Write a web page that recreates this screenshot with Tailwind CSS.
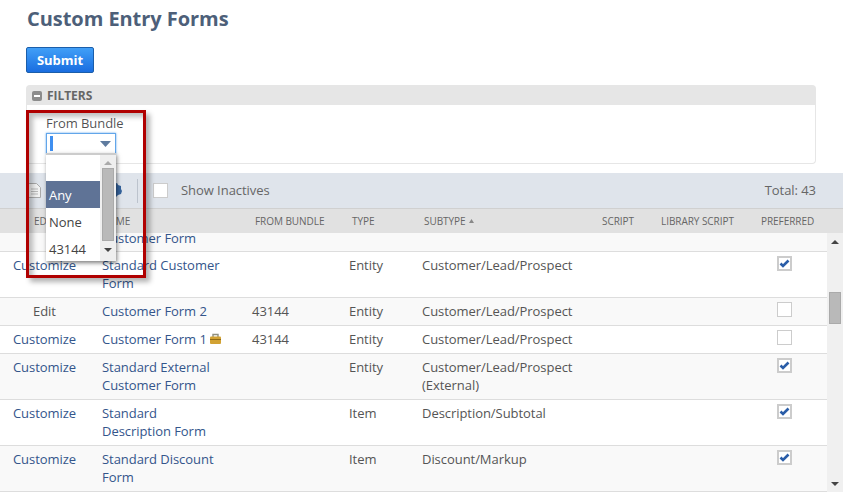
<!DOCTYPE html>
<html lang="en">

<head>
  <meta charset="UTF-8">
  <title>Custom Entry Forms</title>
  <script src="https://cdn.jsdelivr.net/npm/@tailwindcss/browser@4"></script>
</head>

<body class="relative w-[843px] h-[492px] overflow-hidden bg-white font-['Open_Sans',sans-serif] text-[13px] leading-[18px] tracking-[-0.05px] text-[#555]">
  <!-- Title, submit, filters -->
  <div class="pl-[26px] pr-[27px]">
    <h1 class="pl-[1px] h-[47px] pt-[5px] text-[20px] leading-[28px] font-bold text-[#4d5f79]">Custom Entry Forms</h1>
    <button class="block w-[68px] h-[26px] rounded-[2px] border border-[#1b5eaa] bg-gradient-to-b from-[#419ff7] to-[#1a6de0] text-white font-bold text-[13px]">Submit</button>
    <div class="mt-[12px] h-[20px] flex items-center gap-[5px] pl-[6px] pt-[1px] bg-[#e6e6e6] rounded-t-[4px]">
      <span class="w-[10px] h-[10px] rounded-[2px] bg-[#8c8c8c] flex items-center justify-center"><span class="w-[6px] h-[2px] bg-white"></span></span>
      <span class="text-[12px] font-bold text-[#666]">FILTERS</span>
    </div>
    <div class="h-[59px] border border-t-0 border-[#e6e6e6] rounded-b-[4px] pl-[19px] pt-[9px]">
      <div class="text-black/70 leading-[18px]">From Bundle</div>
      <div class="relative w-[70px] h-[21px] border border-[#62a6ea] shadow-[0_0_2px_#62a6ea] mt-[1px] pl-[3px] pt-[2px]">
        <div class="w-[3px] h-[15px] bg-[#3f8ff0]"></div>
        <svg class="absolute left-[53px] top-[7px]" width="11" height="6" viewBox="0 0 11 6"><polygon points="0,0 11,0 5.5,6" fill="#5f7b9f" /></svg>
      </div>
    </div>
  </div>

  <!-- Toolbar -->
  <div class="mt-[9px] h-[35px] bg-[#dfe4eb] flex items-center pl-[28px] pr-[27px]">
    <svg width="13" height="15" viewBox="0 0 13 15"><path d="M.5.5h8l4 4v10H.5z" fill="#f2f2f2" stroke="#aaa" /><path d="M3 6h7M3 8.5h7M3 11h7" stroke="#bbb" /></svg>
    <svg class="ml-[69px] -mt-[2px]" width="12" height="14" viewBox="0 0 12 14"><path d="M6 0a2 2 0 0 1 2 2l3 1v3l1 2-1 3-3 1-2 2-3-2-2-2V3z" fill="#35639c" /></svg>
    <div class="ml-[15px] w-px h-[24px] bg-[#bcc3cd]"></div>
    <div class="ml-[15px] w-[15px] h-[15px] bg-white border border-[#ccc]"></div>
    <span class="ml-[13px] -mt-[2px] text-[#666]">Show Inactives</span>
    <span class="ml-auto -mt-[2px] text-[#666]">Total: 43</span>
  </div>

  <!-- Table header -->
  <div class="h-[25px] bg-[#e1e1e1] border-t border-[#d0d0d0] grid grid-cols-[89px_166px_97px_72px_178px_59px_100px_1fr] items-center text-[10px] text-[#666]">
    <span class="text-center">EDIT</span>
    <span class="pl-[13px]">NAME</span>
    <span>FROM BUNDLE</span>
    <span>TYPE</span>
    <span class="flex items-center gap-[3px]">SUBTYPE
      <svg width="5" height="4" viewBox="0 0 5 4"><polygon points="2.5,0 5,4 0,4" fill="#888" /></svg></span>
    <span>SCRIPT</span>
    <span>LIBRARY SCRIPT</span>
    <span>PREFERRED</span>
  </div>

  <!-- Table body -->
  <div class="flex h-[259px] overflow-hidden">
    <div class="w-[827px]">
      <div class="h-[19px] overflow-hidden bg-[#f9f9f9] border-b border-[#ddd] flex items-end pl-[102px] pb-[4px] text-[#34558b]">Customer Form</div>

      <div class="grid grid-cols-[89px_163px_97px_73px_180px_59px_100px_1fr] bg-white border-b border-[#ddd] pt-[4px] pb-[5px]">
        <a class="text-center text-[#34558b]">Customize</a>
        <a class="pl-[13px] text-[#34558b]">Standard Customer<br>Form</a>
        <span></span>
        <span>Entity</span>
        <span>Customer/Lead/Prospect</span>
        <span></span><span></span>
        <span class="pl-[16px]"><span class="block relative w-[15px] h-[15px] border-2 border-[#ccc] bg-white"><svg class="absolute left-0 top-0" width="11" height="11" viewBox="0 0 11 11"><path d="M1.5 5.5l2.5 2.5L9.5 2.5" fill="none" stroke="#2a5da8" stroke-width="2.6" /></svg></span></span>
      </div>

      <div class="grid grid-cols-[89px_163px_97px_73px_180px_59px_100px_1fr] bg-[#f9f9f9] border-b border-[#ddd] pt-[4px] pb-[5px]">
        <span class="text-center">Edit</span>
        <a class="pl-[13px] text-[#34558b]">Customer Form 2</a>
        <span>43144</span>
        <span>Entity</span>
        <span>Customer/Lead/Prospect</span>
        <span></span><span></span>
        <span class="pl-[16px]"><span class="block w-[15px] h-[15px] border border-[#ccc] bg-white"></span></span>
      </div>

      <div class="grid grid-cols-[89px_163px_97px_73px_180px_59px_100px_1fr] bg-white border-b border-[#ddd] pt-[4px] pb-[5px]">
        <a class="text-center text-[#34558b]">Customize</a>
        <a class="pl-[13px] text-[#34558b] flex items-center gap-[3px]">Customer Form 1
          <svg class="-mt-[1px]" width="11" height="11" viewBox="0 0 11 11"><path d="M3 4V1.5h5V4" fill="none" stroke="#8f8f7f" stroke-width="1.4" /><rect x="0" y="3.5" width="11" height="7.5" rx="1" fill="#d2a233" /><rect x="0" y="6" width="11" height="1" fill="#8f6a14" /></svg></a>
        <span>43144</span>
        <span>Entity</span>
        <span>Customer/Lead/Prospect</span>
        <span></span><span></span>
        <span class="pl-[16px]"><span class="block w-[15px] h-[15px] border border-[#ccc] bg-white"></span></span>
      </div>

      <div class="grid grid-cols-[89px_163px_97px_73px_180px_59px_100px_1fr] bg-[#f9f9f9] border-b border-[#ddd] pt-[4px] pb-[5px]">
        <a class="text-center text-[#34558b]">Customize</a>
        <a class="pl-[13px] text-[#34558b]">Standard External<br>Customer Form</a>
        <span></span>
        <span>Entity</span>
        <span>Customer/Lead/Prospect<br>(External)</span>
        <span></span><span></span>
        <span class="pl-[16px]"><span class="block relative w-[15px] h-[15px] border-2 border-[#ccc] bg-white"><svg class="absolute left-0 top-0" width="11" height="11" viewBox="0 0 11 11"><path d="M1.5 5.5l2.5 2.5L9.5 2.5" fill="none" stroke="#2a5da8" stroke-width="2.6" /></svg></span></span>
      </div>

      <div class="grid grid-cols-[89px_163px_97px_73px_180px_59px_100px_1fr] bg-white border-b border-[#ddd] pt-[4px] pb-[5px]">
        <a class="text-center text-[#34558b]">Customize</a>
        <a class="pl-[13px] text-[#34558b]">Standard<br>Description Form</a>
        <span></span>
        <span>Item</span>
        <span>Description/Subtotal</span>
        <span></span><span></span>
        <span class="pl-[16px]"><span class="block relative w-[15px] h-[15px] border-2 border-[#ccc] bg-white"><svg class="absolute left-0 top-0" width="11" height="11" viewBox="0 0 11 11"><path d="M1.5 5.5l2.5 2.5L9.5 2.5" fill="none" stroke="#2a5da8" stroke-width="2.6" /></svg></span></span>
      </div>

      <div class="grid grid-cols-[89px_163px_97px_73px_180px_59px_100px_1fr] bg-[#f9f9f9] border-b border-[#ddd] pt-[4px] pb-[5px]">
        <a class="text-center text-[#34558b]">Customize</a>
        <a class="pl-[13px] text-[#34558b]">Standard Discount<br>Form</a>
        <span></span>
        <span>Item</span>
        <span>Discount/Markup</span>
        <span></span><span></span>
        <span class="pl-[16px]"><span class="block relative w-[15px] h-[15px] border-2 border-[#ccc] bg-white"><svg class="absolute left-0 top-0" width="11" height="11" viewBox="0 0 11 11"><path d="M1.5 5.5l2.5 2.5L9.5 2.5" fill="none" stroke="#2a5da8" stroke-width="2.6" /></svg></span></span>
      </div>
    </div>

    <!-- Page scrollbar -->
    <div class="w-[16px] bg-[#f0f0f0] flex flex-col items-center pt-[7px]">
      <svg width="8" height="4" viewBox="0 0 8 4"><polygon points="4,0 8,4 0,4" fill="#444" /></svg>
      <div class="mt-[48px] w-[12px] h-[32px] bg-[#b9b9b9] border border-[#aaa]"></div>
      <svg class="mt-auto mb-[6px]" width="8" height="4" viewBox="0 0 8 4"><polygon points="0,0 8,0 4,4" fill="#444" /></svg>
    </div>
  </div>

  <!-- Dropdown open over the table -->
  <div class="absolute left-[46px] top-[153px] w-[70px] h-[108px] flex bg-white border-t-2 border-[#ccc] shadow-[1px_2px_4px_rgba(0,0,0,0.5)] text-[#444]">
    <div class="w-[54px]">
      <div class="h-[26px]"></div>
      <div class="h-[27px] pl-[3px] pt-[5px] bg-[#5f7396] text-white">Any</div>
      <div class="h-[27px] pl-[3px] pt-[5px]">None</div>
      <div class="h-[27px] pl-[3px] pt-[5px]">43144</div>
    </div>
    <div class="w-[16px] bg-[#efefef] flex flex-col items-center pt-[6px]">
      <svg width="8" height="4" viewBox="0 0 8 4"><polygon points="4,0 8,4 0,4" fill="#aaa" /></svg>
      <div class="mt-[3px] w-[12px] h-[73px] bg-[#b9b9b9] border border-[#aaa]"></div>
      <svg class="mt-[7px]" width="8" height="4" viewBox="0 0 8 4"><polygon points="0,0 8,0 4,4" fill="#444" /></svg>
    </div>
  </div>

  <!-- Red annotation box -->
  <div class="absolute left-[26px] top-[110px] w-[120px] h-[168px] border-[3px] border-[#b00000] shadow-[4px_4px_5px_rgba(0,0,0,0.3),inset_4px_4px_5px_rgba(0,0,0,0.25)]"></div>
</body>

</html>
